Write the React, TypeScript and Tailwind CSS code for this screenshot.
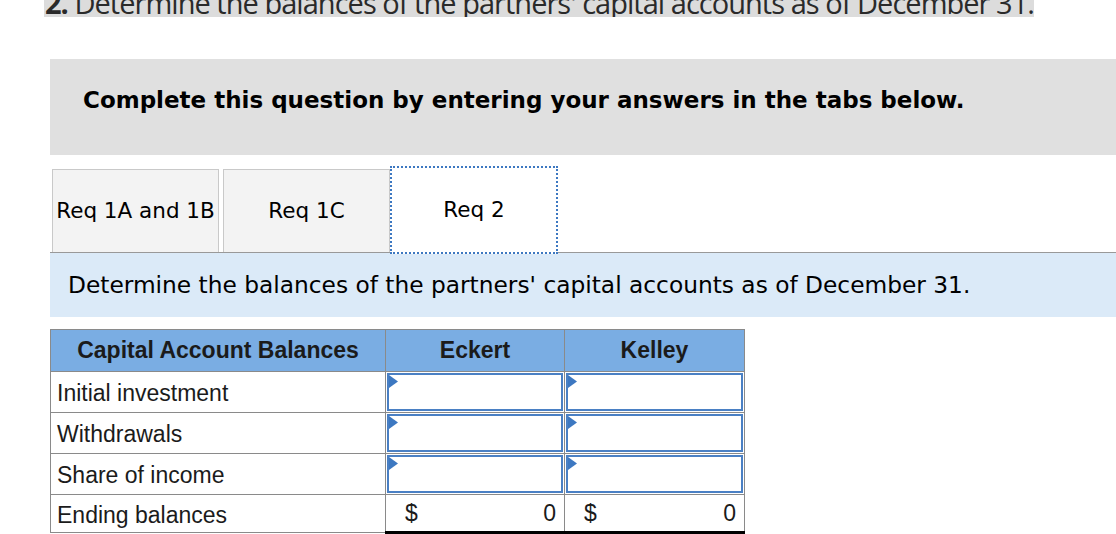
import React from 'react'

const verdana = { fontFamily: '"DejaVu Sans", Verdana, sans-serif' }
const arial = { fontFamily: '"Liberation Sans", Arial, sans-serif' }

function Flag() {
  return (
    <svg className="absolute left-0 top-0" width="9" height="13" viewBox="0 0 9 13">
      <polygon points="0,0 9,6.5 0,13" fill="#3d78c1" />
    </svg>
  )
}

function InputCell() {
  return (
    <td className="border border-[#8a8a8a] p-[1px] h-[41px]">
      <div className="relative h-[38px] border-2 border-[#4a80c4] bg-white">
        <Flag />
      </div>
    </td>
  )
}

function Total() {
  return (
    <td className="border border-[#8a8a8a] border-b-[3px] border-b-black">
      <div className="flex justify-between pl-[19px] pr-[8px]">
        <span>$</span>
        <span>0</span>
      </div>
    </td>
  )
}

const rows = ['Initial investment', 'Withdrawals', 'Share of income']

export default function App() {
  return (
    <div className="w-[1116px] h-[534px] overflow-hidden bg-white text-black">
      {/* clipped question heading */}
      <div className="ml-[44px] w-[990px] h-[17px] bg-[#dcdcdc] overflow-hidden">
        <div className="-mt-[17px] pl-[1px] whitespace-nowrap text-[29px] leading-[40px] text-[#2a2a2a] tracking-[-0.97px]" style={{ fontFamily: '"Open Sans", sans-serif' }}>
          <span className="font-bold">2.</span> Determine the balances of the partners' capital accounts as of December 31.
        </div>
      </div>

      {/* instructions */}
      <div className="mt-[42px] ml-[50px] h-[96px] bg-[#e0e0e0] pl-[33px] pt-[27px]">
        <p className="font-bold text-[23px] leading-[28px]" style={verdana}>
          Complete this question by entering your answers in the tabs below.
        </p>
      </div>

      {/* tabs */}
      <div className="ml-[50px] h-[98px] flex items-end border-b border-[#999] text-[21.5px]" style={verdana}>
        <div className="ml-[2px] w-[167px] h-[83px] bg-[#f3f3f3] border border-b-0 border-[#c9c9c9] flex items-center justify-center whitespace-nowrap">
          Req 1A and 1B
        </div>
        <div className="ml-[4px] w-[167px] h-[83px] bg-[#f3f3f3] border border-b-0 border-[#c9c9c9] flex items-center justify-center">
          Req 1C
        </div>
        <div className="w-[168px] h-[88px] -mb-[2px] bg-white border-2 border-dotted border-[#3d78c1] flex items-center justify-center">
          Req 2
        </div>
      </div>

      {/* prompt */}
      <div className="ml-[50px] h-[64px] bg-[#dbeaf8] flex items-center pl-[18px]">
        <p className="text-[23.3px] whitespace-nowrap" style={verdana}>
          Determine the balances of the partners' capital accounts as of December 31.
        </p>
      </div>

      {/* table */}
      <table className="mt-[12px] ml-[50px] border-collapse" style={arial}>
        <colgroup>
          <col className="w-[335px]" />
          <col className="w-[179px]" />
          <col className="w-[180px]" />
        </colgroup>
        <thead>
          <tr className="h-[42px] bg-[#7aade3] text-[#1b1b1b] text-[23px]">
            <th className="border border-[#8a8a8a] font-bold">Capital Account Balances</th>
            <th className="border border-[#8a8a8a] font-bold">Eckert</th>
            <th className="border border-[#8a8a8a] font-bold">Kelley</th>
          </tr>
        </thead>
        <tbody className="text-[23px] text-[#1b1b1b]">
          {rows.map((r) => (
            <tr key={r}>
              <td className="border border-[#8a8a8a] pl-[6px] pt-[2px] leading-[26px]">{r}</td>
              <InputCell />
              <InputCell />
            </tr>
          ))}
          <tr className="h-[38px]">
            <td className="border border-[#8a8a8a] pl-[6px] pt-[2px] leading-[26px]">Ending balances</td>
            <Total />
            <Total />
          </tr>
        </tbody>
      </table>
    </div>
  )
}
